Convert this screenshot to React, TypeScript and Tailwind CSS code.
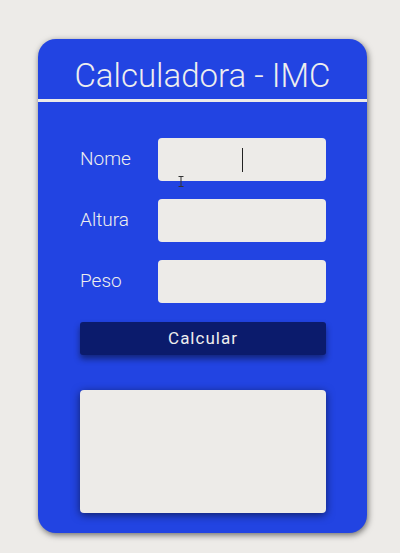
import { useState } from 'react';

function Field({ label, active }: { label: string; active?: boolean }) {
  const [value, setValue] = useState('');
  return (
    <div className="flex items-center">
      <label className="w-[78px] text-[19px] font-light text-[#eeeeee]">{label}</label>
      <div className="relative">
        <input
          value={value}
          onChange={(e) => setValue(e.target.value)}
          className="w-[168px] h-[43px] rounded-[4px] bg-[#edebe8] outline-none px-2 text-[#222]"
        />
        {active && (
          <>
            <span className="absolute left-[84px] top-[10px] w-px h-[24px] bg-[#222]" />
            <svg className="absolute left-[20px] top-[38px]" width="6" height="11" viewBox="0 0 6 11" fill="none" stroke="#333" strokeWidth="1">
              <path d="M0.5 0.5h5M3 0.5v10M0.5 10.5h5" />
            </svg>
          </>
        )}
      </div>
    </div>
  );
}

export default function App() {
  return (
    <div className="min-h-[553px] bg-[#edebe8] pt-[39px] pl-[38px]" style={{ fontFamily: 'Roboto, "Liberation Sans", sans-serif' }}>
      <div className="w-[329px] h-[494px] rounded-[18px] bg-[#2244e2] shadow-[1px_2px_6px_rgba(0,0,0,0.55)] overflow-hidden">
        <div className="h-[60px] pt-[18px] text-center">
          <h1 className="text-[33px] leading-[38px] font-light text-[#eeeeee]">Calculadora - IMC</h1>
        </div>
        <div className="h-[3px] bg-[#edebe8]" />

        <div className="pl-[42px] pr-[41px] pt-[36px] flex flex-col">
          <div className="flex flex-col gap-[18px]">
            <Field label="Nome" active />
            <Field label="Altura" />
            <Field label="Peso" />
          </div>

          <button className="mt-[19px] h-[33px] rounded-[3px] bg-[#0b1b6c] text-[#eeeeee] text-[17px] font-normal tracking-[1px] shadow-[0_4px_6px_rgba(0,0,0,0.45)]">
            Calcular
          </button>

          <div className="mt-[35px] h-[123px] rounded-[4px] bg-[#edebe8] shadow-[0_2px_8px_rgba(0,0,0,0.55)]" />
        </div>
      </div>
    </div>
  );
}
